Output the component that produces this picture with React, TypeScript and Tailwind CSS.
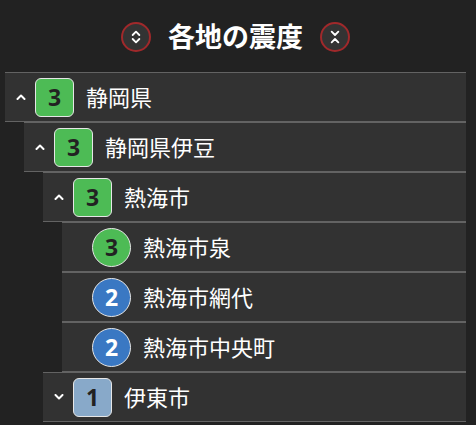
import { ChevronsUpDown, ChevronsDownUp } from "lucide-react";

type Node = {
  name: string;
  level: number;
  scale: number;
  open?: boolean;
  leaf?: boolean;
};

const rows: Node[] = [
  { name: "静岡県", level: 0, scale: 3, open: true },
  { name: "静岡県伊豆", level: 1, scale: 3, open: true },
  { name: "熱海市", level: 2, scale: 3, open: true },
  { name: "熱海市泉", level: 3, scale: 3, leaf: true },
  { name: "熱海市網代", level: 3, scale: 2, leaf: true },
  { name: "熱海市中央町", level: 3, scale: 2, leaf: true },
  { name: "伊東市", level: 2, scale: 1, open: false },
];

const indent = ["ml-0", "ml-[19px]", "ml-[38px]", "ml-[57px]"];

const badgeColor: Record<number, string> = {
  1: "bg-[#88a9c9] text-[#222]",
  2: "bg-[#3a78c3] text-white",
  3: "bg-[#4dbb55] text-[#222]",
};

function Chevron({ up }: { up: boolean }) {
  return (
    <svg width="10" height="6" viewBox="0 0 10 6" className="shrink-0">
      <polyline
        points={up ? "1.5,5 5,1.5 8.5,5" : "1.5,1 5,4.5 8.5,1"}
        fill="none"
        stroke="white"
        strokeWidth="2"
        strokeLinecap="round"
        strokeLinejoin="round"
      />
    </svg>
  );
}

function Row({ node }: { node: Node }) {
  return (
    <div
      className={`${indent[node.level]} flex h-[50px] items-center border-y border-[#636363] bg-[#323232] pl-[11px]`}
    >
      <div className="flex w-[10px] justify-center">
        {!node.leaf && <Chevron up={!!node.open} />}
      </div>
      <div
        className={`ml-[9px] flex h-[39px] w-[39px] shrink-0 items-center justify-center border border-[#e6e6e6] text-[23px] font-bold ${
          node.leaf ? "rounded-full" : "rounded-[6px]"
        } ${badgeColor[node.scale]}`}
      >
        {node.scale}
      </div>
      <span className="ml-[12px] text-[22px] text-white">{node.name}</span>
    </div>
  );
}

export default function App() {
  return (
    <div
      className="h-[425px] w-[476px] overflow-hidden bg-[#222]"
      style={{ fontFamily: '"Noto Sans", "Noto Sans CJK JP", sans-serif' }}
    >
      <div className="ml-[5px] w-[461px]">
        <div className="flex h-[72px] items-center justify-center gap-[17px] pt-[2px]">
          <button className="flex h-[30px] w-[30px] items-center justify-center rounded-full border-2 border-[#a0292b] bg-[#333] text-white">
            <ChevronsUpDown size={16} strokeWidth={2.75} />
          </button>
          <h1 className="text-[27px] font-bold text-white">各地の震度</h1>
          <button className="flex h-[30px] w-[30px] items-center justify-center rounded-full border-2 border-[#a0292b] bg-[#333] text-white">
            <ChevronsDownUp size={16} strokeWidth={2.75} />
          </button>
        </div>
        {rows.map((r) => (
          <Row key={r.name} node={r} />
        ))}
      </div>
    </div>
  );
}
